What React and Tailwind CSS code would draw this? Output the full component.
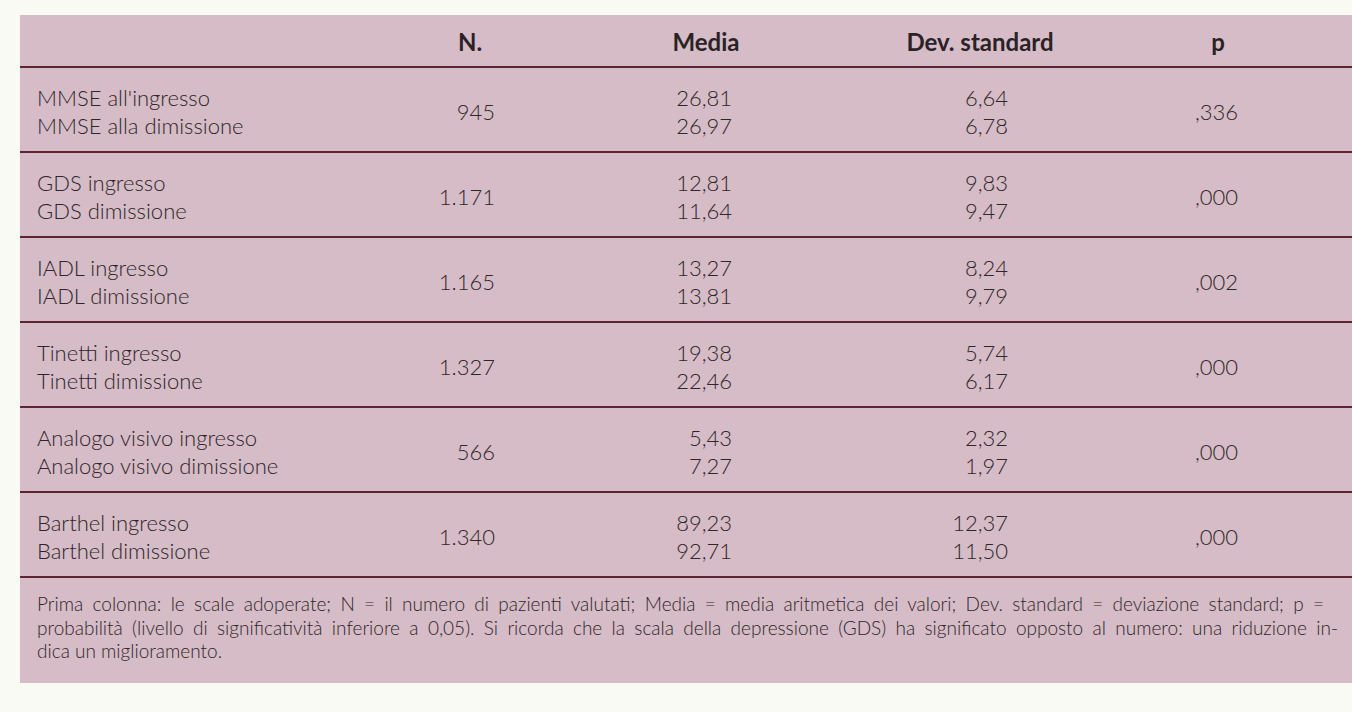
import React from "react";

const rows = [
  { labels: ["MMSE all'ingresso", "MMSE alla dimissione"], n: "945", media: ["26,81", "26,97"], dev: ["6,64", "6,78"], p: ",336" },
  { labels: ["GDS ingresso", "GDS dimissione"], n: "1.171", media: ["12,81", "11,64"], dev: ["9,83", "9,47"], p: ",000" },
  { labels: ["IADL ingresso", "IADL dimissione"], n: "1.165", media: ["13,27", "13,81"], dev: ["8,24", "9,79"], p: ",002" },
  { labels: ["Tinetti ingresso", "Tinetti dimissione"], n: "1.327", media: ["19,38", "22,46"], dev: ["5,74", "6,17"], p: ",000" },
  { labels: ["Analogo visivo ingresso", "Analogo visivo dimissione"], n: "566", media: ["5,43", "7,27"], dev: ["2,32", "1,97"], p: ",000" },
  { labels: ["Barthel ingresso", "Barthel dimissione"], n: "1.340", media: ["89,23", "92,71"], dev: ["12,37", "11,50"], p: ",000" },
];

const grid = "grid grid-cols-[400px_100px_372px_176px_1fr]";

const App = () => {
  return (
    <div className="w-[1352px] h-[712px] bg-[#fafaf4] pt-[15px] pl-[20px] overflow-hidden" style={{ fontFamily: "Lato, 'Open Sans', sans-serif" }}>
      <div className="bg-[#d6bcc6] text-[#2e2629]">
        {/* Header */}
        <div className={`${grid} h-[53px] items-center border-b-2 border-[#5e2433] text-[24px] font-bold text-[#2a2226] pt-[3px]`}>
          <div></div>
          <div className="text-center">N.</div>
          <div className="text-center">Media</div>
          <div className="text-center">Dev. standard</div>
          <div className="text-center pl-[16px]">p</div>
        </div>

        {/* Rows */}
        {rows.map((r, i) => (
          <div key={i} className={`${grid} h-[85px] items-center border-b-2 border-[#5e2433] text-[22px] font-light leading-[28px] pt-[5px]`}>
            <div className="pl-[17px]">
              <div>{r.labels[0]}</div>
              <div>{r.labels[1]}</div>
            </div>
            <div className="text-right pr-[25px]">{r.n}</div>
            <div className="text-right pr-[160px]">
              <div>{r.media[0]}</div>
              <div>{r.media[1]}</div>
            </div>
            <div className="text-right pr-[60px]">
              <div>{r.dev[0]}</div>
              <div>{r.dev[1]}</div>
            </div>
            <div className="text-right pr-[114px]">{r.p}</div>
          </div>
        ))}

        {/* Footnote */}
        <div className="h-[105px] pl-[17px] pr-[14px] pt-[14px] text-[19px] font-light leading-[23.5px]">
          <div className="mr-[14px] text-justify [text-align-last:justify] whitespace-nowrap">
            Prima colonna: le scale adoperate; N = il numero di pazienti valutati; Media = media aritmetica dei valori; Dev. standard = deviazione standard; p =
          </div>
          <div className="text-justify [text-align-last:justify] whitespace-nowrap">
            probabilità (livello di significatività inferiore a 0,05). Si ricorda che la scala della depressione (GDS) ha significato opposto al numero: una riduzione in-
          </div>
          <div>dica un miglioramento.</div>
        </div>
      </div>
    </div>
  );
};

export default App;
